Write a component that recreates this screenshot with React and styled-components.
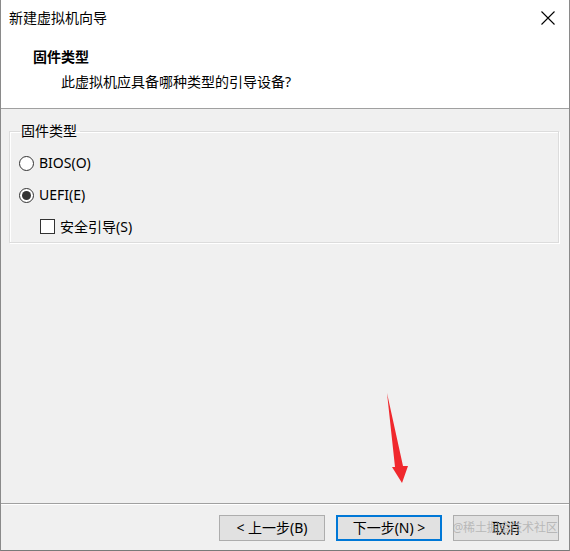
import React, { useState } from 'react';
import styled, { createGlobalStyle } from 'styled-components';

const FONT = '"Noto Sans", "Noto Sans CJK SC", sans-serif';

const GlobalStyle = createGlobalStyle`
  html, body {
    margin: 0;
    padding: 0;
    background: #f0f0f0;
  }
  body {
    font-family: ${FONT};
    font-size: 14px;
    color: #000;
  }
`;

const Window = styled.div`
  position: relative;
  box-sizing: border-box;
  width: 570px;
  height: 551px;
  display: flex;
  flex-direction: column;
  background: #f0f0f0;
  border-left: 1px solid #8a8a8a;
  border-right: 1px solid #8a8a8a;
  border-bottom: 1px solid #7a7a7a;
  overflow: hidden;
`;

const Top = styled.div`
  background: #fff;
  height: 108px;
  border-bottom: 1px solid #a0a0a0;
  display: flex;
  flex-direction: column;
`;

const TitleBar = styled.div`
  height: 36px;
  display: flex;
  align-items: center;
  justify-content: space-between;
  padding: 0 13px 0 8px;
`;

const Title = styled.div`
  font-size: 14px;
  line-height: 20px;
`;

const CloseButton = styled.div`
  width: 16px;
  height: 16px;
  display: flex;
  align-items: center;
  justify-content: center;
`;

const Header = styled.div`
  padding: 11px 0 0 32px;
  display: flex;
  flex-direction: column;
`;

const HeaderTitle = styled.div`
  font-weight: bold;
  line-height: 20px;
`;

const HeaderSub = styled.div`
  line-height: 20px;
  margin: 5px 0 0 28px;
`;

const Body = styled.div`
  flex: 1;
  padding: 12px 10px 0 8px;
`;

const Group = styled.fieldset`
  margin: 0;
  padding: 6px 0 0 9px;
  border: 1px solid #dcdcdc;
  box-shadow: inset 1px 1px 0 #fff, 1px 1px 0 #fff;
  min-height: 0;
`;

const Legend = styled.legend`
  padding: 0 3px 0 1px;
  margin-left: 1px;
  line-height: 20px;
`;

const Option = styled.label`
  display: flex;
  align-items: center;
  height: ${p => p.h || 32}px;
  padding-left: ${p => (p.indent ? 21 : 0)}px;
  gap: 5px;
  cursor: default;
`;

const Radio = styled.span`
  box-sizing: border-box;
  width: 15px;
  height: 15px;
  border-radius: 50%;
  border: 1px solid #333;
  background: #fff;
  display: flex;
  align-items: center;
  justify-content: center;

  &::after {
    content: '';
    width: 9px;
    height: 9px;
    border-radius: 50%;
    background: ${p => (p.checked ? '#333' : 'transparent')};
  }
`;

const Check = styled.span`
  box-sizing: border-box;
  width: 15px;
  height: 15px;
  border: 1px solid #333;
  background: #fff;
`;

const OptionText = styled.span`
  line-height: 20px;
`;

const Footer = styled.div`
  border-top: 1px solid #a0a0a0;
  box-shadow: inset 0 1px 0 #fff;
  height: 47px;
  box-sizing: border-box;
  display: flex;
  justify-content: flex-end;
  align-items: flex-start;
  gap: 11px;
  padding: 11px 10px 0 0;
`;

const Button = styled.button`
  position: relative;
  box-sizing: border-box;
  width: 106px;
  height: 26px;
  font-family: ${FONT};
  font-size: 14px;
  color: #000;
  background: #e1e1e1;
  border: ${p => (p.primary ? '2px solid #0078d7' : '1px solid #adadad')};
  padding: 0;
  margin: 0;
  line-height: 20px;
  overflow: visible;
`;

const Watermark = styled.span`
  position: absolute;
  left: -4px;
  right: -2px;
  top: 3px;
  font-size: 12px;
  line-height: 18px;
  color: rgba(170, 170, 170, 0.75);
  white-space: nowrap;
  letter-spacing: -0.2px;
  pointer-events: none;
`;

const Arrow = styled.svg`
  position: absolute;
  left: 380px;
  top: 388px;
`;

export default function App() {
  const [firmware, setFirmware] = useState('uefi');
  const [secure, setSecure] = useState(false);

  return (
    <>
      <GlobalStyle />
      <Window>
        <Top>
          <TitleBar>
            <Title>新建虚拟机向导</Title>
            <CloseButton>
              <svg width="16" height="16" viewBox="0 0 16 16">
                <path d="M1.5 1.5 L14.5 14.5 M14.5 1.5 L1.5 14.5" stroke="#000" strokeWidth="1.1" />
              </svg>
            </CloseButton>
          </TitleBar>
          <Header>
            <HeaderTitle>固件类型</HeaderTitle>
            <HeaderSub>此虚拟机应具备哪种类型的引导设备?</HeaderSub>
          </Header>
        </Top>

        <Body>
          <Group>
            <Legend>固件类型</Legend>
            <Option onClick={() => setFirmware('bios')}>
              <Radio checked={firmware === 'bios'} />
              <OptionText>BIOS(O)</OptionText>
            </Option>
            <Option onClick={() => setFirmware('uefi')}>
              <Radio checked={firmware === 'uefi'} />
              <OptionText>UEFI(E)</OptionText>
            </Option>
            <Option indent h={31} onClick={() => setSecure(s => !s)}>
              <Check />
              <OptionText>安全引导(S)</OptionText>
            </Option>
          </Group>
        </Body>

        <Footer>
          <Button>&lt; 上一步(B)</Button>
          <Button primary>下一步(N) &gt;</Button>
          <Button>
            取消
            <Watermark>@稀土掘金技术社区</Watermark>
          </Button>
        </Footer>

        <Arrow width="40" height="100" viewBox="0 0 40 100">
          <polygon points="6,5 14,79 11,79 21,95 27,78 22,78" fill="#f0282d" />
        </Arrow>
      </Window>
    </>
  );
}
